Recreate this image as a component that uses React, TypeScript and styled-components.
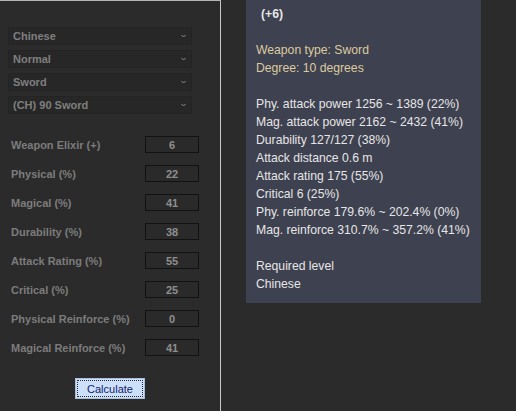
import styled, { createGlobalStyle } from "styled-components";

const GlobalStyle = createGlobalStyle`
  html, body {
    margin: 0;
    padding: 0;
    background: #2b2b2b;
  }
  body {
    font-family: "Liberation Sans", Arial, sans-serif;
  }
`;

const selects = ["Chinese", "Normal", "Sword", "(CH) 90 Sword"];

const fields = [
    { label: "Weapon Elixir (+)", value: "6" },
    { label: "Physical (%)", value: "22" },
    { label: "Magical (%)", value: "41" },
    { label: "Durability (%)", value: "38" },
    { label: "Attack Rating (%)", value: "55" },
    { label: "Critical (%)", value: "25" },
    { label: "Physical Reinforce (%)", value: "0" },
    { label: "Magical Reinforce (%)", value: "41" },
];

const stats = [
    "Phy. attack power 1256 ~ 1389 (22%)",
    "Mag. attack power 2162 ~ 2432 (41%)",
    "Durability 127/127 (38%)",
    "Attack distance 0.6 m",
    "Attack rating 175 (55%)",
    "Critical 6 (25%)",
    "Phy. reinforce 179.6% ~ 202.4% (0%)",
    "Mag. reinforce 310.7% ~ 357.2% (41%)",
];

const Page = styled.div`
  display: flex;
  align-items: flex-start;
  width: 516px;
  height: 411px;
  overflow: hidden;
  background: #2b2b2b;
`;

const Sidebar = styled.div`
  width: 221px;
  height: 411px;
  box-sizing: border-box;
  border-top: 1px solid #b5b5b5;
  border-right: 1px solid #c8c8c8;
  padding: 26px 0 0 8px;
  display: flex;
  flex-direction: column;
`;

const SelectList = styled.div`
  display: flex;
  flex-direction: column;
  gap: 5px;
  width: 184px;
`;

const Select = styled.div`
  height: 18px;
  box-sizing: border-box;
  display: flex;
  align-items: center;
  justify-content: space-between;
  padding: 0 5px 0 4px;
  background: #272727;
  border: 1px solid #242424;
  color: #7f7f7f;
  font-size: 11px;
  font-weight: bold;
`;

const Chevron = () => (
    <svg width="5" height="4" viewBox="0 0 5 4">
        <path d="M0.5 1 L2.5 3 L4.5 1" fill="none" stroke="#8f8f8f" strokeWidth="1" />
    </svg>
);

const FieldList = styled.div`
  display: flex;
  flex-direction: column;
  gap: 12px;
  margin-top: 22px;
`;

const FieldRow = styled.div`
  display: flex;
  align-items: center;
  height: 17px;
`;

const Label = styled.span`
  width: 134px;
  padding-left: 3px;
  color: #7c7c7c;
  font-size: 11px;
  font-weight: bold;
`;

const NumberBox = styled.div`
  width: 54px;
  height: 17px;
  box-sizing: border-box;
  border: 1px solid #121212;
  background: #2a2a2a;
  color: #8e8e8e;
  font-size: 11px;
  font-weight: bold;
  display: flex;
  align-items: center;
  justify-content: center;
`;

const ButtonRow = styled.div`
  display: flex;
  justify-content: center;
  width: 204px;
  margin-top: 22px;
`;

const Button = styled.button`
  width: 70px;
  height: 21px;
  box-sizing: border-box;
  background: #cde0fa;
  border: 1px solid #a9bedf;
  outline: 1px dotted #2a2a2a;
  outline-offset: -3px;
  color: #14206a;
  font-family: "Liberation Sans", Arial, sans-serif;
  font-size: 11px;
  padding: 0;
`;

const InfoPanel = styled.div`
  margin-left: 25px;
  width: 235px;
  box-sizing: border-box;
  background: #3e4150;
  padding: 5px 0 10px 10px;
  color: #e6e6e6;
  font-size: 12.2px;
  line-height: 18px;
`;

const Title = styled.div`
  font-weight: bold;
  padding-left: 5px;
`;

const Line = styled.div<{ $tone?: "gold" }>`
  white-space: nowrap;
  color: ${(p) => (p.$tone === "gold" ? "#dccb9f" : "#e6e6e6")};
`;

const Gap = styled.div`
  height: 18px;
`;

export default function App() {
    return (
        <>
            <GlobalStyle />
            <Page>
                <Sidebar>
                    <SelectList>
                        {selects.map((s) => (
                            <Select key={s}>
                                <span>{s}</span>
                                <Chevron />
                            </Select>
                        ))}
                    </SelectList>
                    <FieldList>
                        {fields.map((f) => (
                            <FieldRow key={f.label}>
                                <Label>{f.label}</Label>
                                <NumberBox>{f.value}</NumberBox>
                            </FieldRow>
                        ))}
                    </FieldList>
                    <ButtonRow>
                        <Button>Calculate</Button>
                    </ButtonRow>
                </Sidebar>
                <InfoPanel>
                    <Title>(+6)</Title>
                    <Gap />
                    <Line $tone="gold">Weapon type: Sword</Line>
                    <Line $tone="gold">Degree: 10 degrees</Line>
                    <Gap />
                    {stats.map((s) => (
                        <Line key={s}>{s}</Line>
                    ))}
                    <Gap />
                    <Line>Required level</Line>
                    <Line>Chinese</Line>
                </InfoPanel>
            </Page>
        </>
    );
}
